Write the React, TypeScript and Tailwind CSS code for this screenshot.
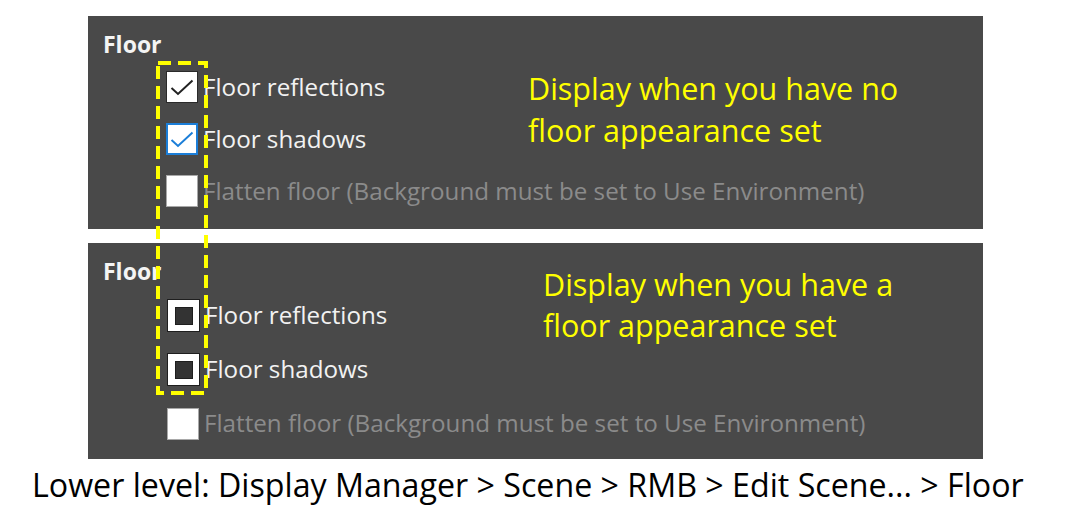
import React from "react"

const ui = { fontFamily: '"Open Sans", "Noto Sans", sans-serif' }

type Kind = "check" | "blue" | "empty" | "indet"

const Box = ({ kind }: { kind: Kind }) => {
  if (kind === "indet") {
    return (
      <div className="w-[33px] h-[33px] shrink-0 border border-[#1e1e1e] bg-white flex items-center justify-center">
        <div className="w-[18px] h-[18px] bg-[#333333] border border-[#1e1e1e]" />
      </div>
    )
  }
  const border =
    kind === "blue" ? "border-2 border-[#1b7ed8]" : kind === "check" ? "border border-[#2a2a2a]" : "border border-[#a8a8a8]"
  return (
    <div className={`w-[32px] h-[32px] shrink-0 bg-white flex items-center justify-center ${border}`}>
      {kind !== "empty" && (
        <svg width="26" height="26" viewBox="0 0 26 26">
          <path
            d="M2.5 14 L9 20 L23.5 6.5"
            fill="none"
            stroke={kind === "blue" ? "#1b7ed8" : "#222"}
            strokeWidth="2"
          />
        </svg>
      )}
    </div>
  )
}

const Row = ({ kind, label, off, h }: { kind: Kind; label: string; off?: boolean; h: string }) => (
  <div className={`flex items-center gap-[5px] ${h}`}>
    <Box kind={kind} />
    <span className={`text-[24.2px] whitespace-nowrap ${off ? "text-[#8b8b8b]" : "text-[#f2f2f2]"}`}>{label}</span>
  </div>
)

const Note = ({ lines, cls }: { lines: string[]; cls: string }) => (
  <div className={`text-[#ffff00] text-[30.5px] ${cls}`}>
    {lines.map((l) => (
      <div key={l} className="whitespace-nowrap">
        {l}
      </div>
    ))}
  </div>
)

export default function App() {
  return (
    <div className="relative w-[1072px] h-[514px] bg-white overflow-hidden" style={ui}>
      <div className="pt-[16px] pl-[88px] flex flex-col gap-[14px]">
        {/* panel without appearance */}
        <div className="relative w-[895px] h-[213px] bg-[#494949]">
          <div className="absolute left-[15px] top-[11px] text-[23px] font-bold text-[#f4f4f4]">Floor</div>
          <div className="pl-[78px] pt-[55px] flex flex-col gap-[20px]">
            <Row kind="check" label="Floor reflections" h="h-[32px]" />
            <Row kind="blue" label="Floor shadows" h="h-[32px]" />
            <Row kind="empty" label="Flatten floor (Background must be set to Use Environment)" off h="h-[32px]" />
          </div>
          <Note lines={["Display when you have no", "floor appearance set"]} cls="absolute left-[440px] top-[51px] leading-[42px]" />
        </div>

        {/* panel with appearance */}
        <div className="relative w-[895px] h-[216px] bg-[#494949]">
          <div className="absolute left-[15px] top-[11px] text-[23px] font-bold text-[#f4f4f4]">Floor</div>
          <div className="pl-[79px] pt-[56px] flex flex-col gap-[21px]">
            <Row kind="indet" label="Floor reflections" h="h-[33px]" />
            <Row kind="indet" label="Floor shadows" h="h-[33px]" />
            <Row kind="empty" label="Flatten floor (Background must be set to Use Environment)" off h="h-[33px]" />
          </div>
          <Note lines={["Display when you have a", "floor appearance set"]} cls="absolute left-[455px] top-[21px] leading-[41px]" />
        </div>
      </div>

      <div className="pl-[32px] pt-[2px] text-[32.2px] text-black whitespace-nowrap">
        Lower level: Display Manager &gt; Scene &gt; RMB &gt; Edit Scene... &gt; Floor
      </div>

      {/* highlight */}
      <svg className="absolute left-[154px] top-[59px]" width="56" height="338">
        <rect x="4" y="4" width="48" height="330" fill="none" stroke="#ffff00" strokeWidth="4" strokeDasharray="13 7" />
      </svg>
    </div>
  )
}
